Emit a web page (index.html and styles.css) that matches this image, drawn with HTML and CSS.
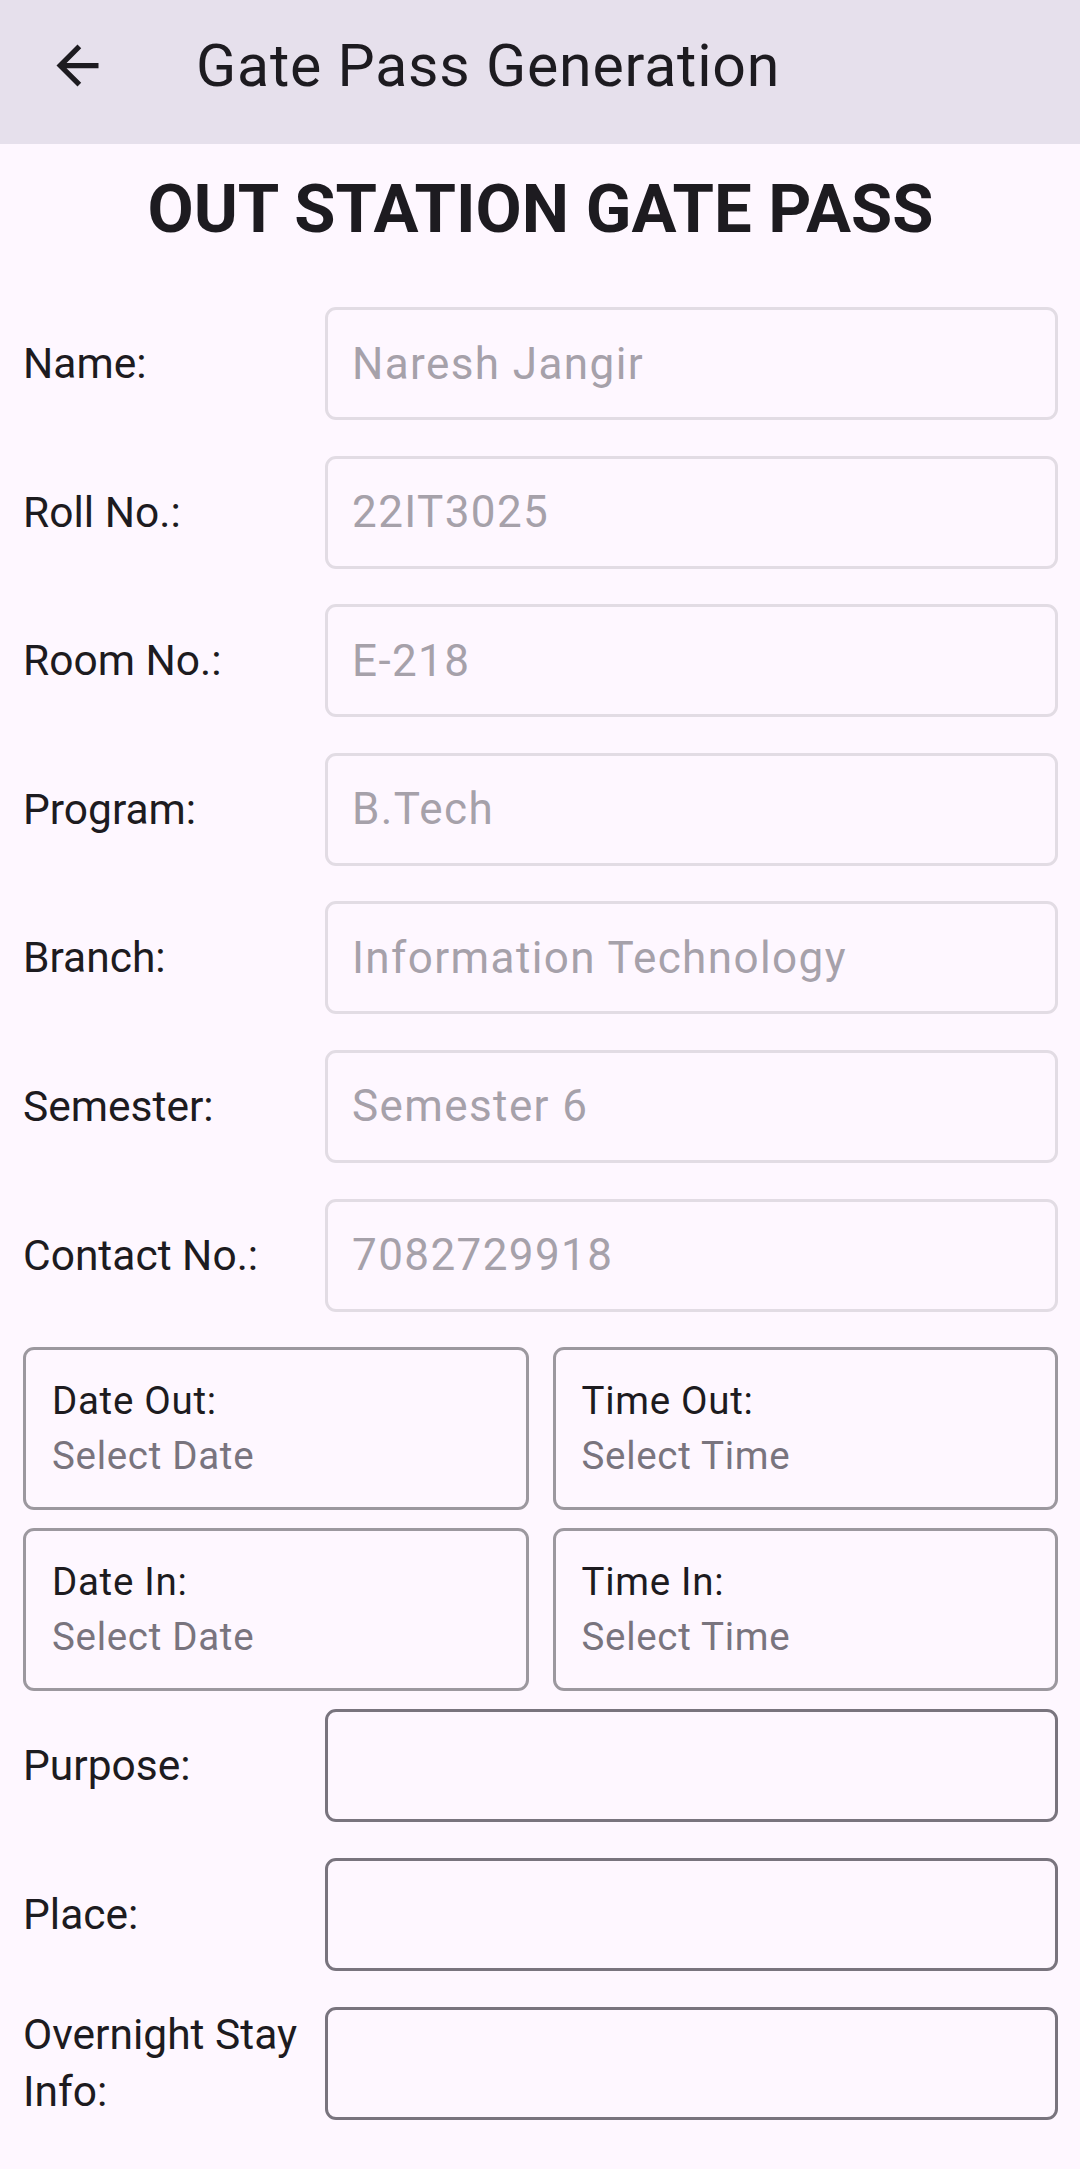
FILE: index.html
```html
<!DOCTYPE html>
<html lang="en">
<head>
<meta charset="utf-8">
<title>Gate Pass Generation</title>
<link rel="stylesheet" href="styles.css">
</head>
<body>
<header class="appbar">
  <button class="back" aria-label="Back">
    <svg viewBox="0 0 24 24" width="63" height="63"><path d="M20 11H7.83l5.59-5.59L12 4l-8 8 8 8 1.41-1.41L7.83 13H20v-2z" fill="#1D1B20"/></svg>
  </button>
  <h1 class="title">Gate Pass Generation</h1>
</header>
<main class="page">
  <h2 class="heading">OUT STATION GATE PASS</h2>
  <div class="form">
    <div class="row"><span class="label">Name:</span><div class="box box-disabled">Naresh Jangir</div></div>
    <div class="row"><span class="label">Roll No.:</span><div class="box box-disabled">22IT3025</div></div>
    <div class="row"><span class="label">Room No.:</span><div class="box box-disabled">E-218</div></div>
    <div class="row"><span class="label">Program:</span><div class="box box-disabled">B.Tech</div></div>
    <div class="row"><span class="label">Branch:</span><div class="box box-disabled">Information Technology</div></div>
    <div class="row"><span class="label">Semester:</span><div class="box box-disabled">Semester 6</div></div>
    <div class="row"><span class="label">Contact No.:</span><div class="box box-disabled">7082729918</div></div>
    <div class="dt-block">
      <div class="dt-grid">
        <div class="dt-card"><div class="dt-title">Date Out:</div><div class="dt-value">Select Date</div></div>
        <div class="dt-card"><div class="dt-title">Time Out:</div><div class="dt-value">Select Time</div></div>
        <div class="dt-card"><div class="dt-title">Date In:</div><div class="dt-value">Select Date</div></div>
        <div class="dt-card"><div class="dt-title">Time In:</div><div class="dt-value">Select Time</div></div>
      </div>
      <div class="row"><span class="label">Purpose:</span><div class="box box-enabled"></div></div>
    </div>
    <div class="row"><span class="label">Place:</span><div class="box box-enabled"></div></div>
    <div class="row"><span class="label">Overnight Stay Info:</span><div class="box box-enabled"></div></div>
  </div>
</main>
</body>
</html>
```

FILE: styles.css
```css
* { box-sizing: border-box; }
html, body {
  margin: 0;
  padding: 0;
  background: #FEF7FF;
  font-family: Roboto, "Noto Sans", "Liberation Sans", sans-serif;
  color: #1D1B20;
}
body { width: 1080px; min-height: 2169px; }

.appbar {
  height: 144px;
  background: #E6E0EC;
  display: flex;
  align-items: center;
  padding: 0 0 13px 0;
}
.back {
  width: 63px;
  height: 63px;
  margin-left: 46px;
  padding: 0;
  border: 0;
  background: none;
  display: flex;
}
.title {
  margin: 0 0 0 87px;
  font-size: 59px;
  font-weight: 400;
  letter-spacing: 0.8px;
  line-height: 68px;
  color: #1D1B20;
}

.page { padding: 0 22px 0 23px; }

.heading {
  margin: 27px 0 59px;
  text-align: center;
  font-size: 67px;
  line-height: 77px;
  font-weight: 700;
  color: #1D1B20;
}

.form {
  display: flex;
  flex-direction: column;
  gap: 35.6px;
}
.dt-block {
  display: flex;
  flex-direction: column;
  gap: 18px;
}
.row {
  display: flex;
  align-items: center;
}
.label {
  width: 302px;
  flex: none;
  font-size: 42.5px;
  line-height: 57px;
  color: #1D1B20;
}
.box {
  flex: 1;
  height: 113px;
  border-radius: 11px;
  border: 3px solid #E2DCE4;
  display: flex;
  align-items: center;
  padding: 0 24px;
  font-size: 44px;
  letter-spacing: 1.4px;
  white-space: nowrap;
}
.box-disabled { color: #A6A1AA; border-color: #E2DCE4; }
.box-enabled { border-color: #79747E; }

.dt-grid {
  display: grid;
  grid-template-columns: 1fr 1fr;
  column-gap: 24px;
  row-gap: 18px;
}
.dt-card {
  height: 163px;
  border: 3px solid #9C989F;
  border-radius: 11px;
  padding: 23px 26px;
}
.dt-title, .dt-value {
  font-size: 38.5px;
  line-height: 55px;
  letter-spacing: 0.7px;
}
.dt-title { color: #1D1B20; }
.dt-value { color: #79747E; }
```
